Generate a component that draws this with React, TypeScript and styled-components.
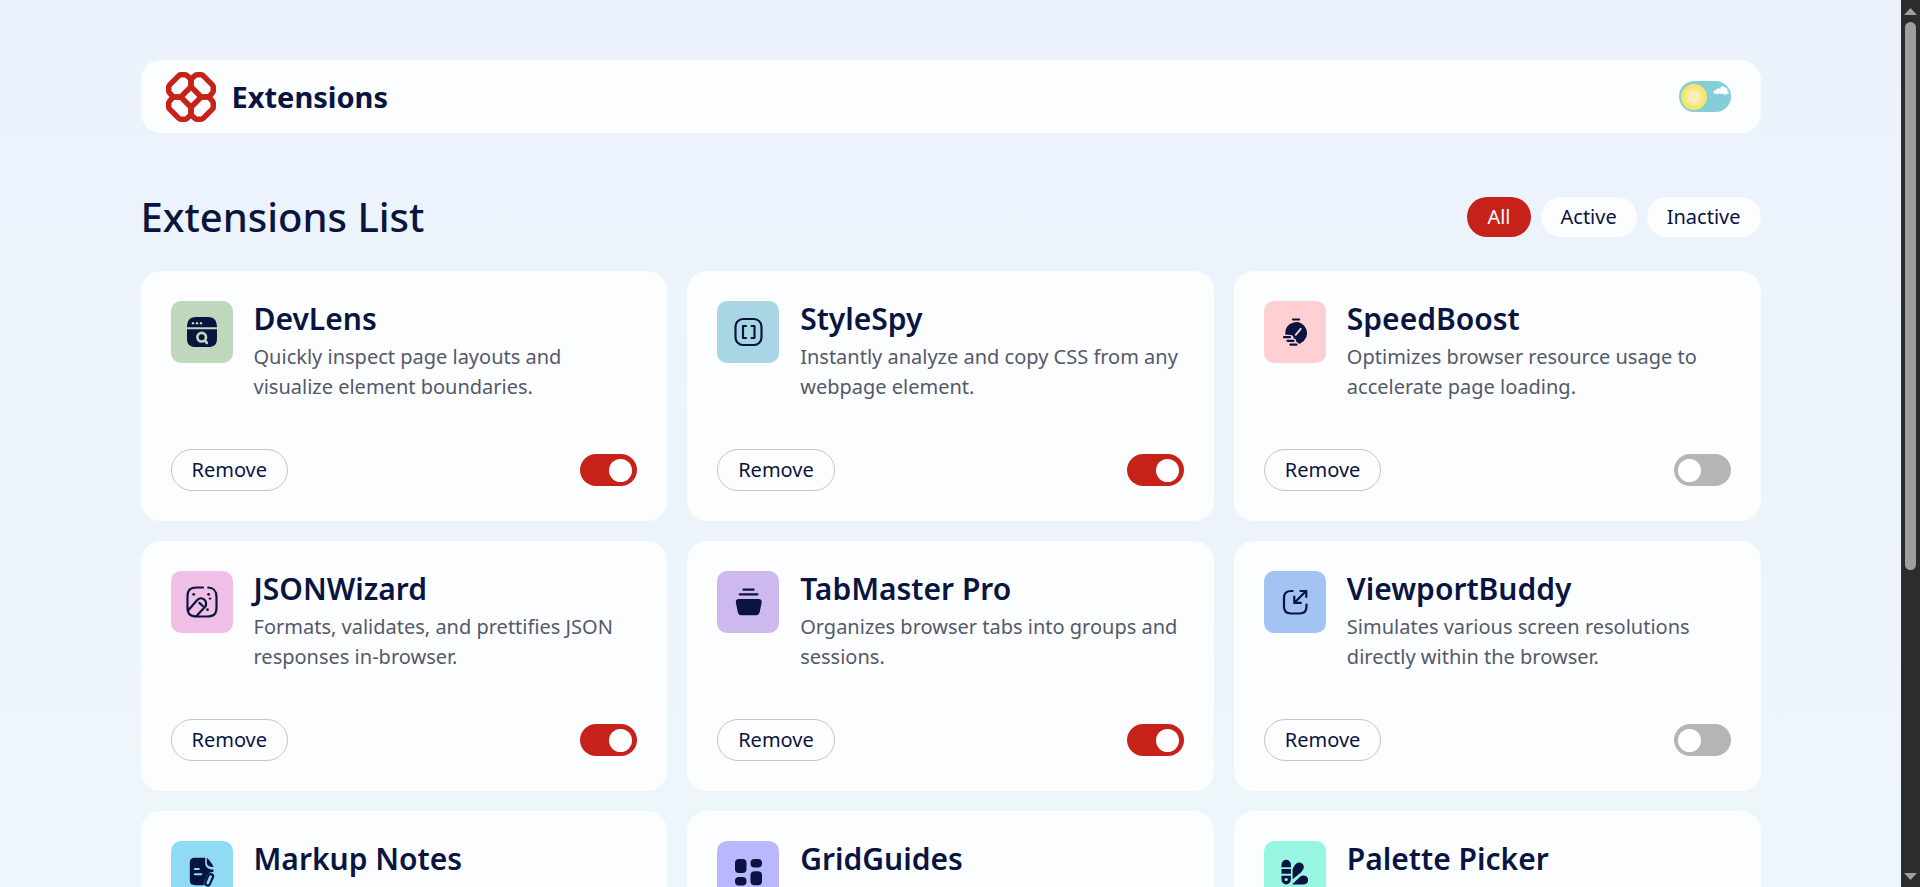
import React, { useState } from 'react';
import type { ReactNode } from 'react';
import styled, { createGlobalStyle, ThemeProvider } from 'styled-components';

const theme = {
  navy: '#091540',
  text: '#545969',
  red: '#c7221a',
  surface: '#fcfdff',
  border: '#c6c6c6',
  off: '#b5b5b5',
};

const GlobalStyle = createGlobalStyle`
  *, *::before, *::after { box-sizing: border-box; }
  body {
    margin: 0;
    color: ${theme.navy};
    font-family: 'Noto Sans', sans-serif;
    font-size: 20px;
    line-height: 30px;
  }
  button { font: inherit; color: inherit; cursor: pointer; }
  h1, h2, p { margin: 0; }
`;

const Shell = styled.div`
  display: grid;
  grid-template-columns: minmax(0, 1fr) 19px;
  height: 100vh;
`;

const Viewport = styled.div`
  overflow-y: auto;
  scrollbar-width: none;
  background: linear-gradient(180deg, #ebf2fc 0, #eef8f9 1400px) local;
`;

const Page = styled.div`
  max-width: 1660px;
  margin: 0 auto;
  padding: 60px 20px;
`;

const Header = styled.header`
  display: flex;
  align-items: center;
  justify-content: space-between;
  min-height: 73px;
  padding: 11px 30px 11px 25px;
  border-radius: 20px;
  background: ${(p) => p.theme.surface};
`;

const Brand = styled.a`
  display: flex;
  align-items: center;
  gap: 16px;
  color: ${(p) => p.theme.navy};
  font-size: 29px;
  font-weight: 700;
  text-decoration: none;
`;

const ThemeSwitch = styled.label`
  position: relative;
  display: block;
  width: 52px;
  height: 31px;
  cursor: pointer;

  input {
    appearance: none;
    display: flex;
    align-items: center;
    width: 100%;
    height: 100%;
    margin: 0;
    padding: 2px;
    border-radius: 16px;
    background: #85cdd9;
    cursor: pointer;
  }
  input::before {
    content: '';
    width: 26px;
    height: 26px;
    border-radius: 50%;
    background: radial-gradient(circle, #f9efb4 0 6px, #f6e88e 7px 9px, #f8e467 10px);
  }
  input:checked { justify-content: flex-end; }
  svg {
    position: absolute;
    top: 5px;
    right: 2px;
    pointer-events: none;
  }
`;

const Toolbar = styled.div`
  display: flex;
  align-items: center;
  justify-content: space-between;
  flex-wrap: wrap;
  margin: 54px 0 24px;
`;

const Heading = styled.h1`
  font-size: 40px;
  font-weight: 500;
  line-height: 60px;
`;

const Filters = styled.div`
  display: flex;
  gap: 10px;
`;

const FilterButton = styled.button<{ $active: boolean }>`
  height: 40px;
  padding: 0 20px;
  border: 0;
  border-radius: 20px;
  color: ${(p) => (p.$active ? p.theme.surface : p.theme.navy)};
  background: ${(p) => (p.$active ? p.theme.red : p.theme.surface)};
`;

const Grid = styled.main`
  display: grid;
  grid-template-columns: repeat(3, minmax(0, 1fr));
  gap: 20px;

  @media (max-width: 1200px) { grid-template-columns: repeat(2, minmax(0, 1fr)); }
  @media (max-width: 760px) { grid-template-columns: 1fr; }
`;

const Card = styled.article`
  display: flex;
  flex-direction: column;
  justify-content: space-between;
  min-height: 250px;
  padding: 30px;
  border-radius: 20px;
  background: ${(p) => p.theme.surface};
`;

const CardBody = styled.div`
  display: flex;
  align-items: flex-start;
  gap: 21px;
`;

const IconTile = styled.svg<{ $tint: string }>`
  flex: none;
  width: 62px;
  height: 62px;
  border-radius: 10px;
  color: ${(p) => p.theme.navy};
  background: ${(p) => p.$tint};
`;

const CardTitle = styled.h2`
  margin-bottom: 6px;
  font-size: 30px;
  font-weight: 600;
  line-height: 35px;
`;

const CardText = styled.p`
  color: ${(p) => p.theme.text};
`;

const CardFooter = styled.div`
  display: flex;
  align-items: center;
  justify-content: space-between;
`;

const RemoveButton = styled.button`
  height: 42px;
  padding: 0 20px;
  border: 1px solid ${(p) => p.theme.border};
  border-radius: 21px;
  background: transparent;
`;

const Toggle = styled.input`
  appearance: none;
  display: flex;
  align-items: center;
  width: 57px;
  height: 32px;
  margin: 0;
  padding: 4px;
  border-radius: 16px;
  background: ${(p) => p.theme.off};
  cursor: pointer;

  &::before {
    content: '';
    width: 23px;
    height: 23px;
    border-radius: 50%;
    background: #fff;
  }
  &:checked {
    justify-content: flex-end;
    padding-right: 5px;
    background: ${(p) => p.theme.red};
  }
`;

const ScrollBar = styled.div`
  display: grid;
  grid-template-rows: 22px minmax(0, 1fr) 22px;
  justify-items: center;
  align-items: center;
  background: #2c2c2c;
`;

const ScrollThumb = styled.div`
  align-self: start;
  width: 11px;
  height: 65%;
  border-radius: 6px;
  background: #9f9f9f;
`;

const tints = {
  green: '#bfd7bc',
  blue: '#a8d6e5',
  pink: '#ffcfd2',
  orchid: '#f0bfe6',
  lilac: '#cdb9ed',
  sky: '#a3c3f3',
  cyan: '#90dbf4',
  violet: '#b9b8ff',
  mint: '#98f5e1',
};

const stroke = {
  fill: 'none',
  stroke: 'currentColor',
  strokeWidth: 2.2,
  strokeLinecap: 'round' as const,
  strokeLinejoin: 'round' as const,
};

type Extension = {
  name: string;
  description?: string;
  tint: string;
  active: boolean;
  icon: ReactNode;
};

const initial: Extension[] = [
  {
    name: 'DevLens',
    description: 'Quickly inspect page layouts and visualize element boundaries.',
    tint: tints.green,
    active: true,
    icon: (
      <>
        <path fill="currentColor" d="M16 26.200c.2-6.800 2.600-10.200 9-10.200h12c6.400 0 8.800 3.400 9 10.200zM16 28.200h30V37c0 6.500-2.500 9-9 9H25c-6.500 0-9-2.500-9-9z" />
        <g fill={tints.green}>
          <circle cx="22" cy="22.300" r="1.200" />
          <circle cx="26" cy="22.300" r="1.200" />
          <circle cx="30" cy="22.300" r="1.200" />
        </g>
        <g fill="none" stroke={tints.green} strokeWidth="2.700" strokeLinecap="round">
          <circle cx="30.700" cy="36.200" r="4.300" />
          <path d="M34 39.500l1.800 2.400" />
        </g>
      </>
    ),
  },
  {
    name: 'StyleSpy',
    description: 'Instantly analyze and copy CSS from any webpage element.',
    tint: tints.blue,
    active: true,
    icon: (
      <g {...stroke}>
        <rect x="18.500" y="18" width="26" height="26" rx="7.500" />
        <path d="M29 25h-3v12h3M34.500 25h3v12h-3" />
      </g>
    ),
  },
  {
    name: 'SpeedBoost',
    description: 'Optimizes browser resource usage to accelerate page loading.',
    tint: tints.pink,
    active: false,
    icon: (
      <>
        <path fill="currentColor" d="M21.200 33.600A11 11 0 1 1 36.500 42.200C35.800 43 34.500 43 34 41.800C33.800 41.200 33 41.200 32 41C33 39 31.600 37.600 29.500 37.400C29.800 35 28.500 34 26.500 33.900z" />
        <path {...stroke} d="M29 18.500h6.200M20 36.200h6M23.500 39.800h6M26.400 43.700h6" />
        <path d="M31.700 33.800l5-6" fill="none" stroke={tints.pink} strokeWidth="1.800" strokeLinecap="round" />
      </>
    ),
  },
  {
    name: 'JSONWizard',
    description: 'Formats, validates, and prettifies JSON responses in-browser.',
    tint: tints.orchid,
    active: true,
    icon: (
      <>
        <path {...stroke} d="M32 16.500h-6c-7 0-9.500 2.500-9.500 9.500v10c0 7 2.500 9.500 9.500 9.500h10c7 0 9.500-2.500 9.500-9.500V26c0-6.500-2.200-9.100-8.200-9.500M17.500 39L26 29.200a5.200 5.200 0 0 1 7.900 6.800L25 45.500M28.300 31.900l3.500 3.100" />
        <g fill="currentColor">
          <circle cx="22.700" cy="23.300" r="1.400" />
          <circle cx="37.600" cy="23.300" r="1.400" />
          <circle cx="39" cy="27.600" r="1.200" />
          <circle cx="36.500" cy="38.700" r="1.400" />
        </g>
      </>
    ),
  },
  {
    name: 'TabMaster Pro',
    description: 'Organizes browser tabs into groups and sessions.',
    tint: tints.lilac,
    active: true,
    icon: (
      <>
        <path {...stroke} d="M26.500 18.700h10M22.800 23.300h17.600" />
        <path fill="currentColor" d="M22 28h19.500c2.600 0 3.500 1.500 3.100 3.700l-1.900 9.400c-.4 2-1.400 3.100-3.500 3.100H24.300c-2.100 0-3.100-1.100-3.500-3.100l-1.900-9.400c-.4-2.200.5-3.700 3.100-3.700z" />
      </>
    ),
  },
  {
    name: 'ViewportBuddy',
    description: 'Simulates various screen resolutions directly within the browser.',
    tint: tints.sky,
    active: false,
    icon: (
      <path {...stroke} d="M28.500 20H27c-5 0-7 2-7 7v8.500c0 5 2 7 7 7h8.500c5 0 7-2 7-7V33.500M42 20L30.500 31.700M30.300 25.500v6.400h6.500M36.500 20H42.300v6" />
    ),
  },
  {
    name: 'Markup Notes',
    tint: tints.cyan,
    active: true,
    icon: (
      <>
        <path fill="currentColor" d="M24 16.800h10.200v4.400c0 5 2.500 7.300 8.200 7.300v2.600c-3.300-.2-5 1-6.300 4l-3 6.500c-.4 1-.4 1.800-.2 2.700H24c-3.600 0-5.200-1.600-5.200-5.200V22c0-3.600 1.600-5.200 5.200-5.200z" />
        <path fill="currentColor" d="M35.800 16.800c.5 0 6.400 6.800 6.600 9.300c-4.600 0-6.600-1.400-6.600-5z" />
        <path d="M23.800 28h4M23.800 33.300h6.500" fill="none" stroke={tints.cyan} strokeWidth="2" strokeLinecap="round" />
        <rect {...stroke} x="35.700" y="32.800" width="4.800" height="12" rx="2.400" transform="rotate(24 38 39)" />
      </>
    ),
  },
  {
    name: 'GridGuides',
    tint: tints.violet,
    active: true,
    icon: (
      <g fill="currentColor">
        <rect x="18" y="18" width="11.500" height="14" rx="4" />
        <rect x="18" y="36" width="11.500" height="8.500" rx="4" />
        <rect x="33.500" y="18" width="11.500" height="8.500" rx="4" />
        <rect x="33.500" y="30.300" width="11.500" height="14" rx="4" />
      </g>
    ),
  },
  {
    name: 'Palette Picker',
    tint: tints.mint,
    active: true,
    icon: (
      <>
        <path fill="currentColor" d="M17.500 26.200v-2.700a4.700 4.700 0 0 1 9.400 0v2.700zM17.500 28h9.400v4.800h-9.400zM17.500 34.700h9.400v4a4.700 4.700 0 0 1-9.400 0zM28.600 38.200V28.500c1-3 2.300-4.600 3.700-6c3.800-3 9.200.7 7 5.500c-.6 1.200-1.500 2.400-2.400 3.400zM28 43.500l8.600-8.300c2.400-1.200 5.800-.6 7 1.500c1.500 3.200-.3 6.600-4 6.800z" />
        <circle cx="22.200" cy="38.500" r="1.600" fill={tints.mint} />
      </>
    ),
  },
];

const filters = ['All', 'Active', 'Inactive'] as const;

function LogoMark() {
  return (
    <svg width="50" height="50" viewBox="0 0 50 50" aria-hidden="true" fill="none" stroke={theme.red} strokeWidth="5.500" strokeLinejoin="round">
      {[0, 90, 180, 270].map((angle) => (
        <path
          key={angle}
          transform={`rotate(${angle} 25 25)`}
          d="M2.700 15.500Q2.700 13.800 3.900 12.600L12.600 3.900Q13.800 2.700 15.500 2.700H18.500Q20 2.700 21.200 3.800L25 7.200V14.800L14.800 25H7.200L3.800 21.200Q2.700 20 2.700 18.500Z"
        />
      ))}
    </svg>
  );
}

export default function App() {
  const [items, setItems] = useState(initial);
  const [filter, setFilter] = useState<(typeof filters)[number]>('All');

  const visible = items.filter((item) => filter === 'All' || item.active === (filter === 'Active'));
  const toggle = (name: string) =>
    setItems((list) => list.map((item) => (item.name === name ? { ...item, active: !item.active } : item)));
  const remove = (name: string) => setItems((list) => list.filter((item) => item.name !== name));

  return (
    <ThemeProvider theme={theme}>
      <GlobalStyle />
      <Shell>
        <Viewport>
          <Page>
            <Header>
              <Brand href="#">
                <LogoMark />
                Extensions
              </Brand>
              <ThemeSwitch>
                <input type="checkbox" aria-label="Dark mode" />
                <svg width="16" height="10" viewBox="0 0 16 10" aria-hidden="true" fill="#fff">
                  <circle cx="2.500" cy="6" r="2" />
                  <circle cx="5.500" cy="4.500" r="2.200" />
                  <circle cx="9.800" cy="3" r="2.700" />
                  <circle cx="12.500" cy="3.800" r="2" />
                  <circle cx="8.500" cy="6" r="2" />
                  <circle cx="11.800" cy="6.800" r="2" />
                  <circle cx="14" cy="6.500" r="1.700" />
                  <circle cx="5" cy="6.500" r="1.700" />
                </svg>
              </ThemeSwitch>
            </Header>

            <Toolbar>
              <Heading>Extensions List</Heading>
              <Filters>
                {filters.map((name) => (
                  <FilterButton key={name} type="button" $active={name === filter} onClick={() => setFilter(name)}>
                    {name}
                  </FilterButton>
                ))}
              </Filters>
            </Toolbar>

            <Grid>
              {visible.map((item) => (
                <Card key={item.name}>
                  <CardBody>
                    <IconTile $tint={item.tint} viewBox="0 0 62 62" aria-hidden="true">
                      {item.icon}
                    </IconTile>
                    <div>
                      <CardTitle>{item.name}</CardTitle>
                      {item.description && <CardText>{item.description}</CardText>}
                    </div>
                  </CardBody>
                  <CardFooter>
                    <RemoveButton type="button" onClick={() => remove(item.name)}>
                      Remove
                    </RemoveButton>
                    <Toggle
                      type="checkbox"
                      aria-label={`Enable ${item.name}`}
                      checked={item.active}
                      onChange={() => toggle(item.name)}
                    />
                  </CardFooter>
                </Card>
              ))}
            </Grid>
          </Page>
        </Viewport>
        <ScrollBar aria-hidden="true">
          <svg width="13" height="7" viewBox="0 0 13 7" fill="#9f9f9f">
            <path d="M6.500 0L13 7H0z" />
          </svg>
          <ScrollThumb />
          <svg width="13" height="7" viewBox="0 0 13 7" fill="#9f9f9f">
            <path d="M0 0h13L6.500 7z" />
          </svg>
        </ScrollBar>
      </Shell>
    </ThemeProvider>
  );
}
